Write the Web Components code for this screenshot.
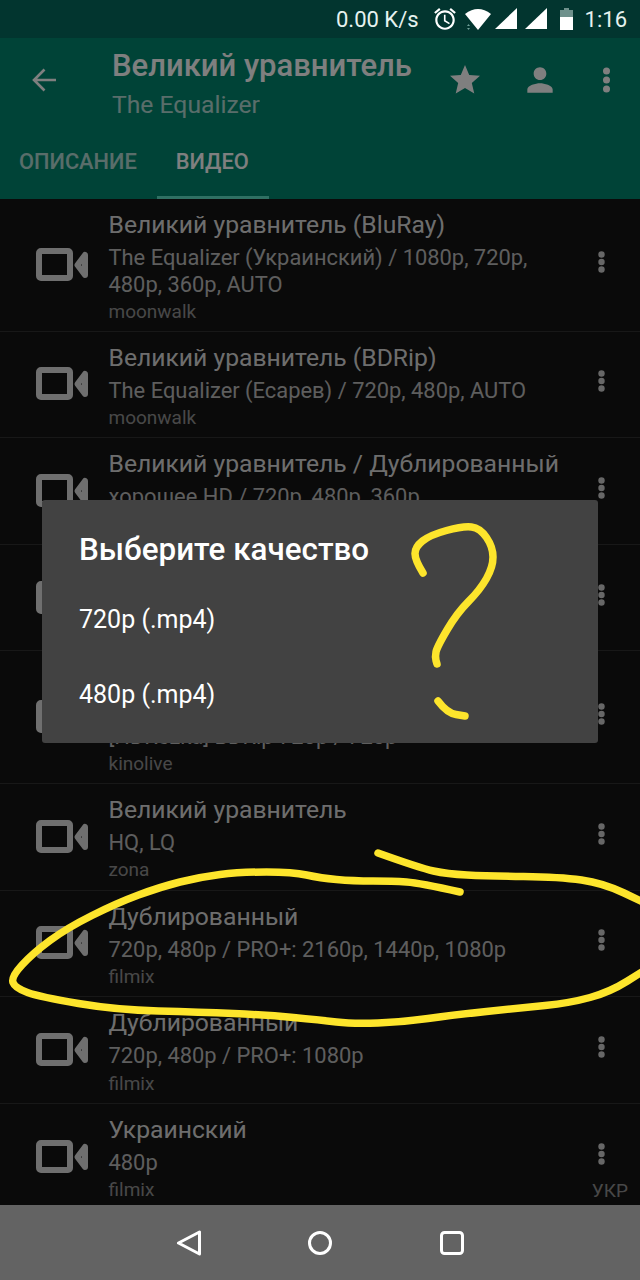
<!DOCTYPE html>
<html lang="ru">
<head>
<meta charset="utf-8">
<title>Видео</title>
<style>
  html, body { margin: 0; padding: 0; background: #0a0a0a; }
  body { font-family: Roboto, "Noto Sans", sans-serif; }
</style>
</head>
<body>
<app-screen>
  <video-row class="tall">
    <span slot="title">Великий уравнитель (BluRay)</span>
    <span slot="info">The Equalizer (Украинский) / 1080p, 720p, 480p, 360p, AUTO</span>
    <span slot="source">moonwalk</span>
  </video-row>
  <video-row>
    <span slot="title">Великий уравнитель (BDRip)</span>
    <span slot="info">The Equalizer (Есарев) / 720p, 480p, AUTO</span>
    <span slot="source">moonwalk</span>
  </video-row>
  <video-row>
    <span slot="title">Великий уравнитель / Дублированный</span>
    <span slot="info">хорошее HD / 720p, 480p, 360p</span>
  </video-row>
  <video-row></video-row>
  <video-row class="tall">
    <span slot="info">&nbsp;<br>[HDRezka] BDRip 720p / 720p</span>
    <span slot="source">kinolive</span>
  </video-row>
  <video-row>
    <span slot="title">Великий уравнитель</span>
    <span slot="info">HQ, LQ</span>
    <span slot="source">zona</span>
  </video-row>
  <video-row>
    <span slot="title">Дублированный</span>
    <span slot="info">720p, 480p / PRO+: 2160p, 1440p, 1080p</span>
    <span slot="source">filmix</span>
  </video-row>
  <video-row>
    <span slot="title">Дублированный</span>
    <span slot="info">720p, 480p / PRO+: 1080p</span>
    <span slot="source">filmix</span>
  </video-row>
  <video-row lang-label="УКР">
    <span slot="title">Украинский</span>
    <span slot="info">480p</span>
    <span slot="source">filmix</span>
  </video-row>
</app-screen>

<script>
class StatusBar extends HTMLElement {
  constructor() {
    super();
    this.attachShadow({ mode: 'open' });
    this.shadowRoot.innerHTML = `
      <style>
        :host {
          display: flex;
          align-items: center;
          justify-content: flex-end;
          height: 38px;
          padding-right: 13px;
          background: #02352f;
          color: #e6f2ef;
          font-size: 22px;
          flex: none;
        }
        svg { display: block; flex: none; }
        .speed { margin-right: 13px; }
        .time { margin-left: 12px; }
      </style>
      <span class="speed">0.00 K/s</span>
      <svg width="26" height="26" viewBox="0 0 24 24" fill="#fff" style="margin-right:6px">
        <path d="M22 5.72l-4.6-3.86-1.29 1.53 4.6 3.86L22 5.72zM7.88 3.39L6.6 1.86 2 5.71l1.29 1.53 4.59-3.85zM12.5 8H11v6l4.75 2.85.75-1.23-4-2.37V8zM12 4c-4.97 0-9 4.03-9 9s4.02 9 9 9c4.97 0 9-4.03 9-9s-4.03-9-9-9zm0 16c-3.87 0-7-3.13-7-7s3.13-7 7-7 7 3.13 7 7-3.13 7-7 7z"/>
      </svg>
      <svg width="28" height="24" viewBox="0 0 28 24" style="margin-right:3px">
        <path d="M1 7Q14-3 27 7L14 23Z" fill="#fff"/>
        <path d="M3 19l1.5-2 1.500 2zM3 21l1.500 2 1.500-2z" fill="#6f9f97"/>
      </svg>
      <svg width="22" height="22" viewBox="0 0 22 22" style="margin-right:8px"><path d="M0 21L22 0V21Z" fill="#fff"/></svg>
      <svg width="22" height="22" viewBox="0 0 22 22" style="margin-right:13px"><path d="M0 21L22 0V21Z" fill="#fff"/></svg>
      <svg width="13" height="22" viewBox="0 0 13 22">
        <path d="M4 0h5v2h4v7H0V2h4z" fill="#6f918c"/>
        <path d="M0 9h13v13H0z" fill="#fff"/>
      </svg>
      <span class="time">1:16</span>
    `;
  }
}

class AppHeader extends HTMLElement {
  constructor() {
    super();
    this.attachShadow({ mode: 'open' });
    this.shadowRoot.innerHTML = `
      <style>
        :host { display: block; background: #00866f; color: #fff; flex: none; }
        svg { display: block; }
        .toolbar { display: flex; align-items: center; height: 91px; }
        .back { width: 112px; flex: none; padding-left: 32px; box-sizing: border-box; margin-bottom: 7px; }
        .titles { flex: 1; min-width: 0; }
        .title { font-size: 31px; font-weight: 500; line-height: 36px; white-space: nowrap; }
        .subtitle { font-size: 24.700px; line-height: 30px; margin-top: 6px; opacity: .7; }
        .actions { display: flex; align-items: center; margin-bottom: 7px; }
        .tabs { display: flex; height: 70px; }
        .tab {
          box-sizing: border-box;
          padding: 18px 20px 0 19px;
          font-size: 21.800px;
          font-weight: 500;
          line-height: 30px;
          text-transform: uppercase;
          opacity: .7;
        }
        .tab.active { opacity: 1; border-bottom: 3px solid #5fe0c6; }
      </style>
      <div class="toolbar">
        <div class="back">
          <svg width="24" height="24" viewBox="0 0 24 24" fill="none" stroke="#fff" stroke-width="2.600">
            <path d="M24 12H2M12.500 1.500L2 12l10.500 10.500"/>
          </svg>
        </div>
        <div class="titles">
          <div class="title">Великий уравнитель</div>
          <div class="subtitle">The Equalizer</div>
        </div>
        <div class="actions">
          <svg width="36" height="36" viewBox="0 0 24 24" fill="#fff" style="margin-right:38px"><path d="M12 17.270L18.180 21l-1.640-7.030L22 9.240l-7.190-.610L12 2 9.190 8.630 2 9.240l5.460 4.730L5.820 21z"/></svg>
          <svg width="38" height="38" viewBox="0 0 24 24" fill="#fff" style="margin-right:43.500px"><path d="M12 12c2.210 0 4-1.790 4-4s-1.790-4-4-4-4 1.790-4 4 1.790 4 4 4zm0 2c-2.670 0-8 1.340-8 4v2h16v-2c0-2.660-5.330-4-8-4z"/></svg>
          <svg width="7" height="26" viewBox="0 0 7 26" fill="#fff" style="margin-right:30.500px"><circle cx="3.500" cy="4" r="3.500"/><circle cx="3.500" cy="13" r="3.500"/><circle cx="3.500" cy="22" r="3.500"/></svg>
        </div>
      </div>
      <div class="tabs">
        <div class="tab">Описание</div>
        <div class="tab active">Видео</div>
      </div>
    `;
  }
}

class VideoRow extends HTMLElement {
  constructor() {
    super();
    this.attachShadow({ mode: 'open' });
    this.shadowRoot.innerHTML = `
      <style>
        :host {
          display: flex;
          position: relative;
          box-sizing: border-box;
          height: 106.600px;
          padding: 11px 12px 8px 0;
          border-bottom: 1.500px solid rgba(255, 255, 255, .12);
          flex: none;
        }
        :host(.tall) { height: 132.600px; }
        svg { display: block; }
        .icon { width: 108.500px; flex: none; display: flex; align-items: center; padding: 0 0 3px 36px; box-sizing: border-box; }
        .text { flex: 1; min-width: 0; }
        .title { font-size: 24.700px; line-height: 30px; min-height: 30px; color: rgba(255, 255, 255, .87); white-space: nowrap; }
        .info { font-size: 21.900px; line-height: 26.500px; min-height: 26px; margin-top: 5px; color: rgba(255, 255, 255, .72); }
        .source { font-size: 19px; line-height: 24px; min-height: 24px; margin-top: 2px; color: rgba(255, 255, 255, .54); }
        .more { width: 53px; flex: none; display: flex; align-items: center; justify-content: center; padding-bottom: 9px; box-sizing: border-box; }
        .lang { position: absolute; right: 12px; top: 75px; font-size: 19px; line-height: 24px; color: rgba(255, 255, 255, .54); }
      </style>
      <div class="icon">
        <svg width="52" height="34" viewBox="0 0 52 34" fill="none" stroke="#dedede">
          <rect x="3" y="3" width="31" height="27" rx="2" stroke-width="6"/>
          <path d="M49 7V27L41.500 17Z" stroke-width="6" stroke-linejoin="round"/>
        </svg>
      </div>
      <div class="text">
        <div class="title"><slot name="title"></slot></div>
        <div class="info"><slot name="info"></slot></div>
        <div class="source"><slot name="source"></slot></div>
      </div>
      <div class="more">
        <svg width="7" height="22" viewBox="0 0 7 22" fill="#cfcfcf"><circle cx="3.500" cy="3.500" r="3.200"/><circle cx="3.500" cy="11" r="3.200"/><circle cx="3.500" cy="18.500" r="3.200"/></svg>
      </div>
    `;
    if (this.hasAttribute('lang-label')) {
      const lang = document.createElement('span');
      lang.className = 'lang';
      lang.textContent = this.getAttribute('lang-label');
      this.shadowRoot.appendChild(lang);
    }
  }
}

class QualityDialog extends HTMLElement {
  constructor() {
    super();
    this.attachShadow({ mode: 'open' });
    this.shadowRoot.innerHTML = `
      <style>
        :host {
          display: block;
          width: 556px;
          height: 243px;
          box-sizing: border-box;
          padding: 32px 37px 0;
          background: #424242;
          border-radius: 3px;
          color: #fff;
        }
        .title { font-size: 31.400px; font-weight: 500; line-height: 36px; }
        .item { font-size: 25px; line-height: 75px; height: 75px; }
        .items { margin-top: 14px; }
      </style>
      <div class="title">Выберите качество</div>
      <div class="items">
        <div class="item">720p (.mp4)</div>
        <div class="item">480p (.mp4)</div>
      </div>
    `;
  }
}

// the hand drawn marks on top of the screenshot, points read from the picture
const SCRIBBLES = [
  [[423,573],[415,560],[415,547],[430,535],[463,526],[480,528],[493,547],[493,567],[480,590],[457,613],[437,647],[435,657],[437,664]],
  [[438,701],[447,713],[465,716]],
  [[378,853],[420,868],[447,874],[487,876],[560,877],[603,883],[645,903]],
  [[460,892],[420,883],[393,881],[353,881],[320,878],[293,872],[240,872],[200,877],[160,887],[117,903],[67,928],[33,953],[11,977],[15,988],[40,997],[117,1010],[200,1012],[267,1015],[320,1020],[353,1024],[403,1022],[453,1015],[520,1008],[570,1003],[610,992],[645,970]]
];

function smoothPath(pts) {
  let d = `M${pts[0][0]} ${pts[0][1]}`;
  for (let i = 1; i < pts.length - 1; i++) {
    const mx = (pts[i][0] + pts[i + 1][0]) / 2;
    const my = (pts[i][1] + pts[i + 1][1]) / 2;
    d += `Q${pts[i][0]} ${pts[i][1]} ${mx} ${my}`;
  }
  const last = pts[pts.length - 1];
  return d + `L${last[0]} ${last[1]}`;
}

class YellowScribble extends HTMLElement {
  constructor() {
    super();
    this.attachShadow({ mode: 'open' });
    const paths = SCRIBBLES.map(p => `<path d="${smoothPath(p)}"/>`).join('');
    this.shadowRoot.innerHTML = `
      <style>
        :host { position: absolute; left: 0; top: 0; width: 640px; height: 1280px; pointer-events: none; }
        svg { display: block; }
      </style>
      <svg width="640" height="1280" viewBox="0 0 640 1280" fill="none" stroke="#fde52c" stroke-width="7.500" stroke-linecap="round" stroke-linejoin="round">${paths}</svg>
    `;
  }
}

class NavBar extends HTMLElement {
  constructor() {
    super();
    this.attachShadow({ mode: 'open' });
    this.shadowRoot.innerHTML = `
      <style>
        :host {
          display: flex;
          align-items: center;
          justify-content: center;
          gap: 106px;
          height: 75px;
          background: #636363;
          flex: none;
        }
        svg { display: block; }
      </style>
      <svg width="26" height="26" viewBox="0 0 26 26" fill="none" stroke="#fff" stroke-width="3" stroke-linejoin="round"><path d="M24.500 2V24L3.500 13Z"/></svg>
      <svg width="26" height="26" viewBox="0 0 26 26" fill="none" stroke="#fff" stroke-width="3"><circle cx="13" cy="13" r="10.500"/></svg>
      <svg width="26" height="26" viewBox="0 0 26 26" fill="none" stroke="#fff" stroke-width="3"><rect x="2.500" y="2.500" width="21" height="21" rx="3"/></svg>
    `;
  }
}

class AppScreen extends HTMLElement {
  constructor() {
    super();
    this.attachShadow({ mode: 'open' });
    this.shadowRoot.innerHTML = `
      <style>
        :host {
          display: flex;
          flex-direction: column;
          position: relative;
          width: 640px;
          height: 1280px;
          overflow: hidden;
        }
        main { flex: 1; min-height: 0; position: relative; display: flex; flex-direction: column; overflow: hidden; }
        .list { flex: 1; min-height: 0; display: flex; flex-direction: column; background: #141414; overflow: hidden; }
        .scrim {
          position: absolute;
          inset: 0;
          background: rgba(0, 0, 0, .5);
          display: flex;
          justify-content: center;
          padding-top: 462px;
          box-sizing: border-box;
        }
      </style>
      <status-bar></status-bar>
      <main>
        <app-header></app-header>
        <div class="list"><slot></slot></div>
        <div class="scrim"><quality-dialog></quality-dialog></div>
      </main>
      <nav-bar></nav-bar>
      <yellow-scribble></yellow-scribble>
    `;
  }
}

customElements.define('status-bar', StatusBar);
customElements.define('app-header', AppHeader);
customElements.define('video-row', VideoRow);
customElements.define('quality-dialog', QualityDialog);
customElements.define('yellow-scribble', YellowScribble);
customElements.define('nav-bar', NavBar);
customElements.define('app-screen', AppScreen);
</script>
</body>
</html>
